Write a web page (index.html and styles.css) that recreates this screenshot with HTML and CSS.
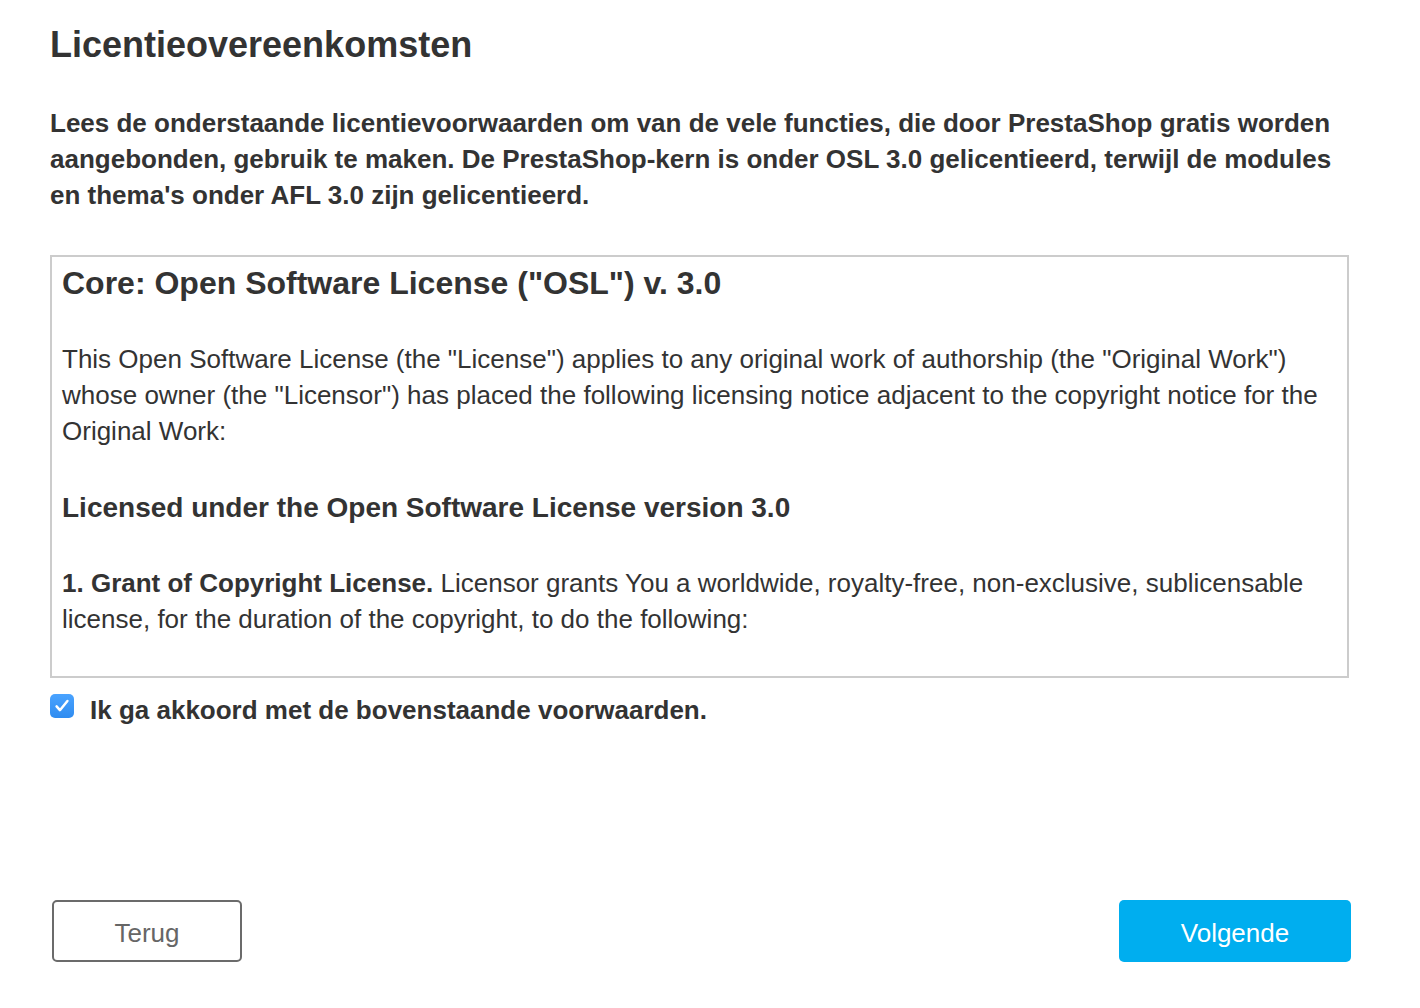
FILE: index.html
```html
<!DOCTYPE html>
<html lang="nl">
<head>
<meta charset="utf-8">
<title>Licentieovereenkomsten</title>
<link rel="stylesheet" href="styles.css">
</head>
<body>
<main class="page">
  <h1 class="title">Licentieovereenkomsten</h1>
  <p class="intro">Lees de onderstaande licentievoorwaarden om van de vele functies, die door PrestaShop gratis worden aangebonden, gebruik te maken. De PrestaShop-kern is onder OSL 3.0 gelicentieerd, terwijl de modules en thema's onder AFL 3.0 zijn gelicentieerd.</p>
  <div class="license">
    <h2 class="license-title">Core: Open Software License ("OSL") v. 3.0</h2>
    <p class="license-text">This Open Software License (the "License") applies to any original work of authorship (the "Original Work") whose owner (the "Licensor") has placed the following licensing notice adjacent to the copyright notice for the Original Work:</p>
    <h3 class="license-sub">Licensed under the Open Software License version 3.0</h3>
    <p class="license-text"><b class="lead">1. Grant of Copyright License.</b> Licensor grants You a worldwide, royalty-free, non-exclusive, sublicensable license, for the duration of the copyright, to do the following:</p>
  </div>
  <label class="agree">
    <span class="check"><svg viewBox="0 0 24 24" width="20" height="20"><path d="M5.5 12.5l4 4.5L18.5 6" fill="none" stroke="#fff" stroke-width="3" stroke-linecap="round" stroke-linejoin="round"/></svg></span>
    <span class="agree-text">Ik ga akkoord met de bovenstaande voorwaarden.</span>
  </label>
  <div class="actions">
    <button class="btn btn-back">Terug</button>
    <button class="btn btn-next">Volgende</button>
  </div>
</main>
</body>
</html>
```
FILE: styles.css
```css
html, body {
  margin: 0;
  padding: 0;
  background: #fff;
}
body {
  font-family: "Liberation Sans", Arial, Helvetica, sans-serif;
  color: #333;
}
.page {
  width: 1299px;
  padding: 23px 0 0 50px;
}
.title {
  margin: 0;
  font-size: 36px;
  line-height: 44px;
  font-weight: bold;
}
.intro {
  margin: 38px 0 0;
  font-size: 26px;
  line-height: 36px;
  font-weight: bold;
}
.license {
  margin-top: 42px;
  height: 423px;
  box-sizing: border-box;
  border: 2px solid #ccc;
  padding: 8px 10px 0 10px;
  overflow: hidden;
}
.license-title {
  margin: 0;
  font-size: 32px;
  line-height: 36px;
  font-weight: bold;
}
.license-text {
  margin: 40px 0 0;
  font-size: 26px;
  line-height: 36px;
}
.lead {
  font-weight: bold;
}
.license-sub {
  margin: 41px 0 0;
  font-size: 28px;
  line-height: 36px;
  font-weight: bold;
}
.license-sub + .license-text {
  margin-top: 39px;
}
.agree {
  display: flex;
  align-items: flex-start;
  gap: 16px;
  margin-top: 14px;
}
.check {
  flex: none;
  width: 24px;
  height: 24px;
  margin-top: 2px;
  border-radius: 5px;
  background: linear-gradient(#4aa3ff, #2f8cf0);
  display: flex;
  align-items: center;
  justify-content: center;
}
.agree-text {
  font-size: 26px;
  line-height: 36px;
  font-weight: bold;
}
.actions {
  display: flex;
  justify-content: space-between;
  margin-top: 172px;
  margin-left: 2px;
  margin-right: -2px;
}
.btn {
  font-family: "Liberation Sans", Arial, Helvetica, sans-serif;
  font-size: 26px;
  height: 62px;
  padding: 4px 0 0;
  border-radius: 5px;
  cursor: pointer;
}
.btn-back {
  width: 190px;
  background: #fff;
  border: 2px solid #6b6b6b;
  color: #666;
}
.btn-next {
  width: 232px;
  background: #00aeef;
  border: none;
  color: #fff;
}
```
